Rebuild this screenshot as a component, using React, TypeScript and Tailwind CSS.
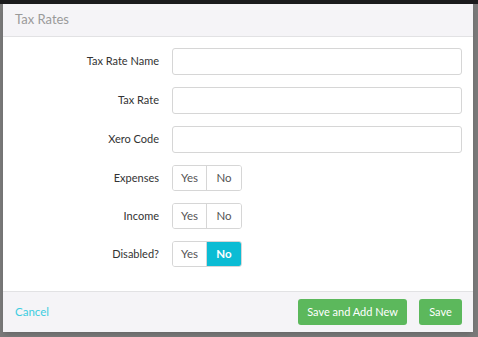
import { useState } from "react";

type Choice = "yes" | "no" | null

function Toggle({ value }: { value: Choice }) {
	const [v, setV] = useState<Choice>(value)
	const base = "w-[35px] h-full flex items-center justify-center"
	return (
		<div className="flex h-[26px] w-[70px] rounded-[3px] border border-[#d6d6d6] overflow-hidden text-[11.5px] text-[#555]">
			<button onClick={() => setV("yes")} className={`${base} border-r border-[#d6d6d6] ${v === "yes" ? "bg-[#0bbcd4] text-white" : "bg-white"}`}>Yes</button>
			<button onClick={() => setV("no")} className={`${base} ${v === "no" ? "bg-[#0bbcd4] text-white font-bold" : "bg-white"}`}>No</button>
		</div>
	)
}

function Row({ label, children }: { label: string, children: React.ReactNode }) {
	return (
		<div className="flex items-center">
			<label className="w-[156px] text-right text-[11px] text-[#333]">{label}</label>
			<div className="ml-[13px] flex-1">{children}</div>
		</div>
	)
}

export default function App() {
	return (
		<div className="h-[337px] w-[478px] bg-[#7a7a7a] font-['Lato','Liberation_Sans',sans-serif] overflow-hidden">
			<div className="h-[4px] bg-[#1b1b1d]" />
			<div className="ml-[3px] w-[470px] h-[328px] bg-white flex flex-col shadow-md">
				<div className="h-[33px] bg-[#f5f4f7] border-b border-[#e2e2e4] flex items-center px-[12px]">
					<h3 className="text-[13px] text-[#9a9a9a]">Tax Rates</h3>
				</div>
				<div className="flex-1 flex flex-col gap-[12px] pt-[11px] pr-[11px]">
					<Row label="Tax Rate Name">
						<input className="w-full h-[27px] border border-[#d6d6d6] rounded-[3px] px-2 outline-none" />
					</Row>
					<Row label="Tax Rate">
						<input className="w-full h-[27px] border border-[#d6d6d6] rounded-[3px] px-2 outline-none" />
					</Row>
					<Row label="Xero Code">
						<input className="w-full h-[27px] border border-[#d6d6d6] rounded-[3px] px-2 outline-none" />
					</Row>
					<Row label="Expenses"><Toggle value={null} /></Row>
					<Row label="Income"><Toggle value={null} /></Row>
					<Row label="Disabled?"><Toggle value="no" /></Row>
				</div>
				<div className="h-[41px] bg-[#f5f4f7] border-t border-[#e2e2e4] flex items-center pl-[12px] pr-[11px]">
					<button className="text-[11.5px] text-[#3ccde0]">Cancel</button>
					<button className="ml-auto h-[26px] w-[109px] rounded-[3px] bg-[#5cb85c] text-white text-[11px]">Save and Add New</button>
					<button className="ml-[12px] h-[26px] w-[43px] rounded-[3px] bg-[#5cb85c] text-white text-[11px]">Save</button>
				</div>
			</div>
		</div>
	)
}
